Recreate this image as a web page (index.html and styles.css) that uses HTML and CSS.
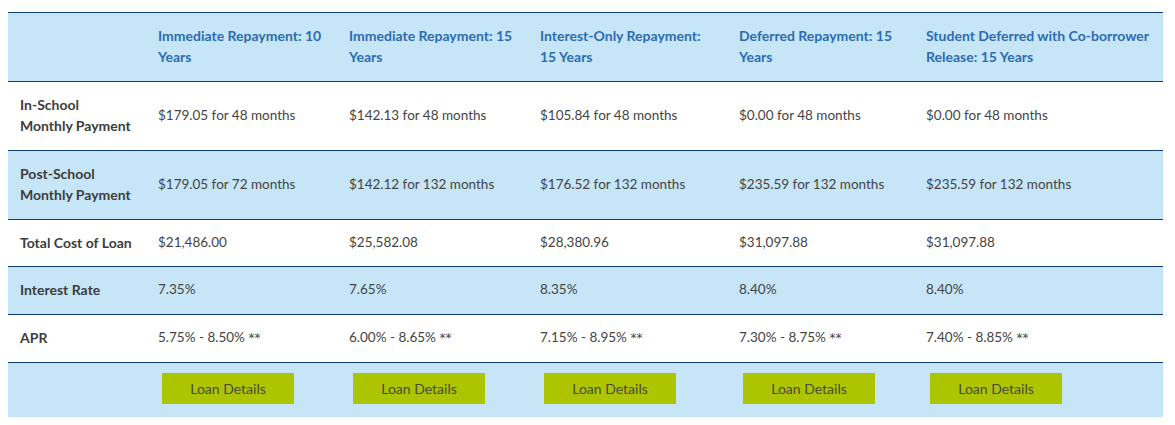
FILE: index.html
```html
<!DOCTYPE html>
<html>
<head>
<meta charset="utf-8">
<link rel="stylesheet" href="styles.css">
</head>
<body>
<table class="rates">
  <colgroup>
    <col class="c0"><col class="c1"><col class="c2"><col class="c3"><col class="c4"><col class="c5">
  </colgroup>
  <thead>
    <tr class="shade">
      <th></th>
      <th>Immediate Repayment: 10 Years</th>
      <th>Immediate Repayment: 15 Years</th>
      <th>Interest-Only Repayment: 15 Years</th>
      <th>Deferred Repayment: 15 Years</th>
      <th>Student Deferred with Co-borrower Release: 15 Years</th>
    </tr>
  </thead>
  <tbody>
    <tr>
      <td class="label">In-School<br>Monthly Payment</td>
      <td>$179.05 for 48 months</td>
      <td>$142.13 for 48 months</td>
      <td>$105.84 for 48 months</td>
      <td>$0.00 for 48 months</td>
      <td>$0.00 for 48 months</td>
    </tr>
    <tr class="shade">
      <td class="label">Post-School<br>Monthly Payment</td>
      <td>$179.05 for 72 months</td>
      <td>$142.12 for 132 months</td>
      <td>$176.52 for 132 months</td>
      <td>$235.59 for 132 months</td>
      <td>$235.59 for 132 months</td>
    </tr>
    <tr class="tight">
      <td class="label">Total Cost of Loan</td>
      <td>$21,486.00</td>
      <td>$25,582.08</td>
      <td>$28,380.96</td>
      <td>$31,097.88</td>
      <td>$31,097.88</td>
    </tr>
    <tr class="shade">
      <td class="label">Interest Rate</td>
      <td>7.35%</td>
      <td>7.65%</td>
      <td>8.35%</td>
      <td>8.40%</td>
      <td>8.40%</td>
    </tr>
    <tr>
      <td class="label">APR</td>
      <td>5.75% - 8.50% <span class="ast">**</span></td>
      <td>6.00% - 8.65% <span class="ast">**</span></td>
      <td>7.15% - 8.95% <span class="ast">**</span></td>
      <td>7.30% - 8.75% <span class="ast">**</span></td>
      <td>7.40% - 8.85% <span class="ast">**</span></td>
    </tr>
    <tr class="shade actions">
      <td></td>
      <td><a class="btn" href="#">Loan Details</a></td>
      <td><a class="btn" href="#">Loan Details</a></td>
      <td><a class="btn" href="#">Loan Details</a></td>
      <td><a class="btn" href="#">Loan Details</a></td>
      <td><a class="btn" href="#">Loan Details</a></td>
    </tr>
  </tbody>
</table>
</body>
</html>
```
FILE: styles.css
```css
html, body {
  margin: 0;
  padding: 0;
  background: #ffffff;
}
body {
  padding: 12px 12px 0 8px;
  font-family: Lato, "Open Sans", sans-serif;
  color: #444444;
}
.rates {
  width: 1155px;
  border-collapse: collapse;
  table-layout: fixed;
  border-top: 1px solid #0d3d6e;
}
.c0 { width: 138px; }
.c1 { width: 191px; }
.c2 { width: 191px; }
.c3 { width: 199px; }
.c4 { width: 187px; }
.c5 { width: 249px; }
.rates tr {
  border-bottom: 1px solid #0d3d6e;
}
.rates tr.actions {
  border-bottom: none;
}
.shade {
  background: #c6e5f7;
}
.rates th,
.rates td {
  text-align: left;
  vertical-align: middle;
  padding: 12px 12px 14px 12px;
  font-size: 13.5px;
  line-height: 21px;
}
.rates tr.tight td {
  padding-bottom: 13px;
}
.rates th {
  color: #2d6cb0;
  font-weight: 700;
  font-size: 14px;
}
.rates td {
  color: #444444;
}
.rates td.label {
  font-weight: 700;
  font-size: 14px;
  color: #3d3d3d;
}
.ast {
  font-family: "DejaVu Sans", sans-serif;
  font-size: 12px;
  line-height: 0;
}
.rates tr.actions td {
  padding: 10px 12px 13px 16px;
}
.btn {
  display: block;
  width: 132px;
  height: 31px;
  line-height: 31px;
  background: #adc400;
  color: #4a4a3a;
  text-align: center;
  text-decoration: none;
  font-size: 14px;
}
```
